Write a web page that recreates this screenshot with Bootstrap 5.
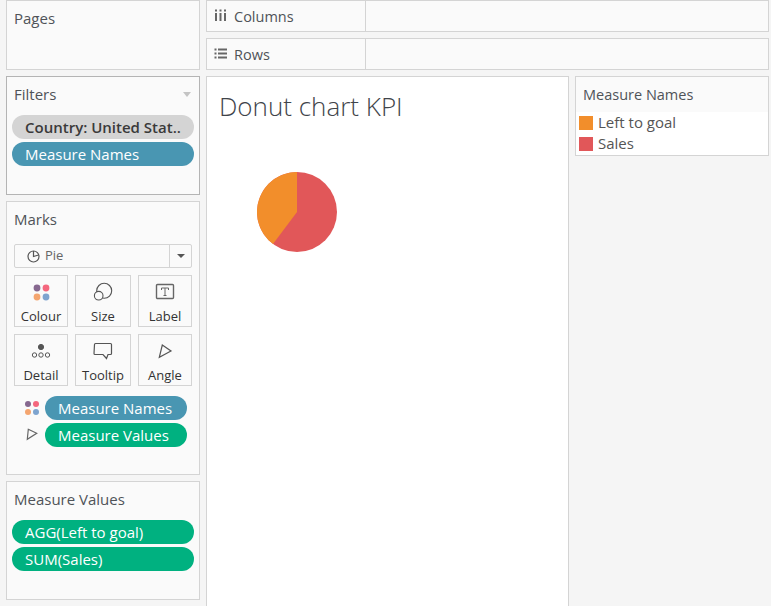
<!DOCTYPE html>
<html lang="en">
<head>
  <meta charset="UTF-8">
  <title>Donut chart KPI</title>
  <meta name="viewport" content="width=device-width, initial-scale=1">
  <link href="https://cdn.jsdelivr.net/npm/bootstrap@5.3.3/dist/css/bootstrap.min.css" rel="stylesheet">
  <style>
    html, body { height: 606px; overflow: hidden; }
    body { background: #f5f5f5; color: #4f5358; font-family: "Open Sans", "Liberation Sans", sans-serif; font-size: 15px; }
    .workbook { height: 606px; padding: 0 2px 0 6px; gap: 6px; }
    .side-col { width: 194px; gap: 6px; padding-bottom: 6px; }
    .main-col { width: 563px; gap: 6px; }
    .panel { background: #fafafa; border: 1px solid #d4d4d4; }
    .panel-title { font-size: 15px; line-height: 20px; margin: 0; }
    .pages-panel { height: 70px; padding: 7px 7px; }
    .filters-panel { height: 119px; padding: 7px 5px 0; border-color: #b4b4b4; }
    .marks-panel { height: 274px; padding: 7px 7px 0; }
    .values-panel { height: 119px; padding: 7px 5px 0; }
    .filters-panel .panel-title, .values-panel .panel-title { padding-left: 2px; }
    .caret-mark { width: 0; height: 0; border: 4px solid transparent; border-top: 5px solid #c4c4c4; border-bottom: 0; margin-right: -1px; }
    .pill-stack { gap: 3px; margin-top: 11px; }
    .field-pill { height: 24px; border-radius: 12px; padding-left: 13px; line-height: 24px; white-space: nowrap; color: #fff; font-size: 15px; }
    .pill-grey { background: #d4d4d4; color: #3a3a3a; font-weight: 600; }
    .pill-blue { background: #4996b2; }
    .pill-green { background: #00b180; }
    .mark-select { height: 24px; margin-top: 15px; border: 1px solid #d4d4d4; border-radius: 2px; background: #fafafa; font-size: 13px; color: #666; }
    .mark-select-label { padding-left: 12px; gap: 5px; }
    .mark-select-arrow { width: 22px; height: 22px; border-left: 1px solid #d4d4d4; }
    .mark-select-arrow i { border: 4px solid transparent; border-top: 4px solid #555; border-bottom: 0; }
    .mark-grid { display: grid; grid-template-columns: 54px 56px 54px; column-gap: 7px; row-gap: 7px; margin-top: 7px; }
    .mark-tile { height: 52px; border: 1px solid #d4d4d4; color: #333; font-size: 13px; line-height: 16px; padding-bottom: 2px; }
    .mark-tile svg { height: 24px; width: 24px; margin-bottom: 3px; }
    .mark-fields { gap: 3px; margin-top: 10px; }
    .field-row { gap: 5px; padding-left: 10px; }
    .field-row svg { width: 16px; height: 16px; }
    .field-row .field-pill { width: 142px; }
    .shelf { height: 32px; flex-shrink: 0; font-size: 14.5px; }
    .shelf-head { width: 159px; border-right: 1px solid #d4d4d4; padding-left: 7px; gap: 7px; height: 100%; padding-top: 1px; }
    .shelf-head svg { width: 13px; height: 13px; margin-top: -3px; }
    .chart-row { gap: 6px; }
    .chart-panel { width: 363px; height: 530px; background: #fff; border: 1px solid #d4d4d4; border-bottom: 0; padding: 12px 12px; }
    .chart-title { font-family: "Open Sans", "Liberation Sans", sans-serif; font-weight: 300; font-size: 26px; line-height: 34px; color: #3f444a; margin: 0; }
    .pie-chart { display: block; width: 80px; height: 80px; margin: 49px 0 0 38px; }
    .legend-panel { width: 194px; height: 80px; background: #fff; border: 1px solid #d4d4d4; }
    .legend-title { background: #fafafa; height: 35px; padding: 8px 7px 0; line-height: 20px; font-size: 14.5px; }
    .legend-item { height: 21px; padding-left: 3px; gap: 5px; color: #555; }
    .swatch { width: 14px; height: 14px; }
  </style>
</head>
<body>

  <div class="workbook d-flex">
    <div class="side-col d-flex flex-column">
      <div class="panel pages-panel"><h2 class="panel-title">Pages</h2></div>

      <div class="panel filters-panel">
        <div class="d-flex justify-content-between align-items-center pe-1">
          <h2 class="panel-title">Filters</h2>
          <span class="caret-mark"></span>
        </div>
        <div class="pill-stack d-flex flex-column">
          <div class="field-pill pill-grey">Country: United Stat..</div>
          <div class="field-pill pill-blue">Measure Names</div>
        </div>
      </div>

      <div class="panel marks-panel">
        <h2 class="panel-title">Marks</h2>
        <div class="mark-select d-flex justify-content-between align-items-center">
          <span class="mark-select-label d-flex align-items-center">
            <svg width="13" height="13" viewBox="0 0 13 13" fill="none" stroke="#555" stroke-width="1.2"><circle cx="6.500" cy="6.500" r="5.500"/><path d="M6.500 1V6.500L11.500 5"/></svg>
            Pie
          </span>
          <span class="mark-select-arrow d-flex justify-content-center align-items-center"><i></i></span>
        </div>

        <div class="mark-grid">
          <div class="mark-tile d-flex flex-column align-items-center justify-content-end">
            <svg viewBox="0 0 24 24"><circle cx="8" cy="7" r="3.400" fill="#86688f"/><circle cx="17" cy="7" r="3.400" fill="#f4677e"/><circle cx="8" cy="16" r="3.400" fill="#f4a56f"/><circle cx="17" cy="16" r="3.400" fill="#7ea4cf"/></svg>
            Colour
          </div>
          <div class="mark-tile d-flex flex-column align-items-center justify-content-end">
            <svg viewBox="0 0 24 24" fill="none" stroke="#555" stroke-width="1.100"><circle cx="13.200" cy="9.800" r="7.500"/><circle cx="7.700" cy="14.700" r="4.300" fill="#fafafa"/></svg>
            Size
          </div>
          <div class="mark-tile d-flex flex-column align-items-center justify-content-end">
            <svg viewBox="0 0 24 24" fill="none"><rect x="3.500" y="3.500" width="17" height="14" rx="1" stroke="#666" stroke-width="1.400"/><path d="M8.500 9V7h7v2M12 7v7.500M10.500 14.500h3" stroke="#666"/></svg>
            Label
          </div>
          <div class="mark-tile d-flex flex-column align-items-center justify-content-end">
            <svg viewBox="0 0 24 24" fill="none" stroke="#555"><circle cx="12" cy="7" r="2.600" fill="#555"/><circle cx="5.500" cy="15" r="2.200"/><circle cx="12" cy="15" r="2.200"/><circle cx="18.500" cy="15" r="2.200"/></svg>
            Detail
          </div>
          <div class="mark-tile d-flex flex-column align-items-center justify-content-end">
            <svg viewBox="0 0 24 24" fill="none" stroke="#555" stroke-width="1.200"><path d="M3.500 4.500a1 1 0 0 1 1-1h15a1 1 0 0 1 1 1v9a1 1 0 0 1-1 1h-2.500l-1.500 4-3.500-4h-8a1 1 0 0 1-1-1z"/></svg>
            Tooltip
          </div>
          <div class="mark-tile d-flex flex-column align-items-center justify-content-end">
            <svg viewBox="0 0 24 24" fill="none" stroke="#555" stroke-width="1.200"><path d="M9.300 5L18 11 6.300 17.300z"/></svg>
            Angle
          </div>
        </div>

        <div class="mark-fields d-flex flex-column">
          <div class="field-row d-flex align-items-center">
            <svg viewBox="0 0 16 16"><circle cx="4" cy="4" r="3" fill="#86688f"/><circle cx="12" cy="4" r="3" fill="#f4677e"/><circle cx="4" cy="12" r="3" fill="#f4a56f"/><circle cx="12" cy="12" r="3" fill="#7ea4cf"/></svg>
            <div class="field-pill pill-blue">Measure Names</div>
          </div>
          <div class="field-row d-flex align-items-center">
            <svg viewBox="0 0 16 16" fill="none" stroke="#666" stroke-width="1.200"><path d="M4.300 2.300L12.700 6.300 3.300 12.300z"/></svg>
            <div class="field-pill pill-green">Measure Values</div>
          </div>
        </div>
      </div>

      <div class="panel values-panel">
        <h2 class="panel-title">Measure Values</h2>
        <div class="pill-stack d-flex flex-column">
          <div class="field-pill pill-green">AGG(Left to goal)</div>
          <div class="field-pill pill-green">SUM(Sales)</div>
        </div>
      </div>
    </div>

    <div class="main-col d-flex flex-column">
      <div class="panel shelf">
        <div class="shelf-head d-flex align-items-center">
          <svg viewBox="0 0 13 13" fill="#666"><rect x="1" y="0.500" width="2" height="2"/><rect x="5.500" y="0.500" width="2" height="2"/><rect x="10" y="0.500" width="2" height="2"/><rect x="1" y="4" width="2" height="8"/><rect x="5.500" y="4" width="2" height="8"/><rect x="10" y="4" width="2" height="8"/></svg>
          Columns
        </div>
      </div>
      <div class="panel shelf">
        <div class="shelf-head d-flex align-items-center">
          <svg viewBox="0 0 13 13" fill="#666"><rect x="0.500" y="1.500" width="2" height="2"/><rect x="4" y="1.500" width="9" height="2"/><rect x="0.500" y="5.500" width="2" height="2"/><rect x="4" y="5.500" width="9" height="2"/><rect x="0.500" y="9.500" width="2" height="2"/><rect x="4" y="9.500" width="9" height="2"/></svg>
          Rows
        </div>
      </div>
      <div class="chart-row d-flex align-items-start">
        <div class="chart-panel">
          <h1 class="chart-title">Donut chart KPI</h1>
          <svg class="pie-chart" viewBox="0 0 80 80">
            <circle cx="40" cy="40" r="40" fill="#e15759"/>
            <path d="M40 40V0A40 40 0 0 0 16 72z" fill="#f28e2b"/>
          </svg>
        </div>
        <div class="legend-panel">
          <div class="legend-title">Measure Names</div>
          <div class="legend-item d-flex align-items-center"><span class="swatch" style="background:#f28e2b"></span>Left to goal</div>
          <div class="legend-item d-flex align-items-center"><span class="swatch" style="background:#e15759"></span>Sales</div>
        </div>
      </div>
    </div>
  </div>

  <script src="https://cdn.jsdelivr.net/npm/bootstrap@5.3.3/dist/js/bootstrap.bundle.min.js"></script>
</body>
</html>
